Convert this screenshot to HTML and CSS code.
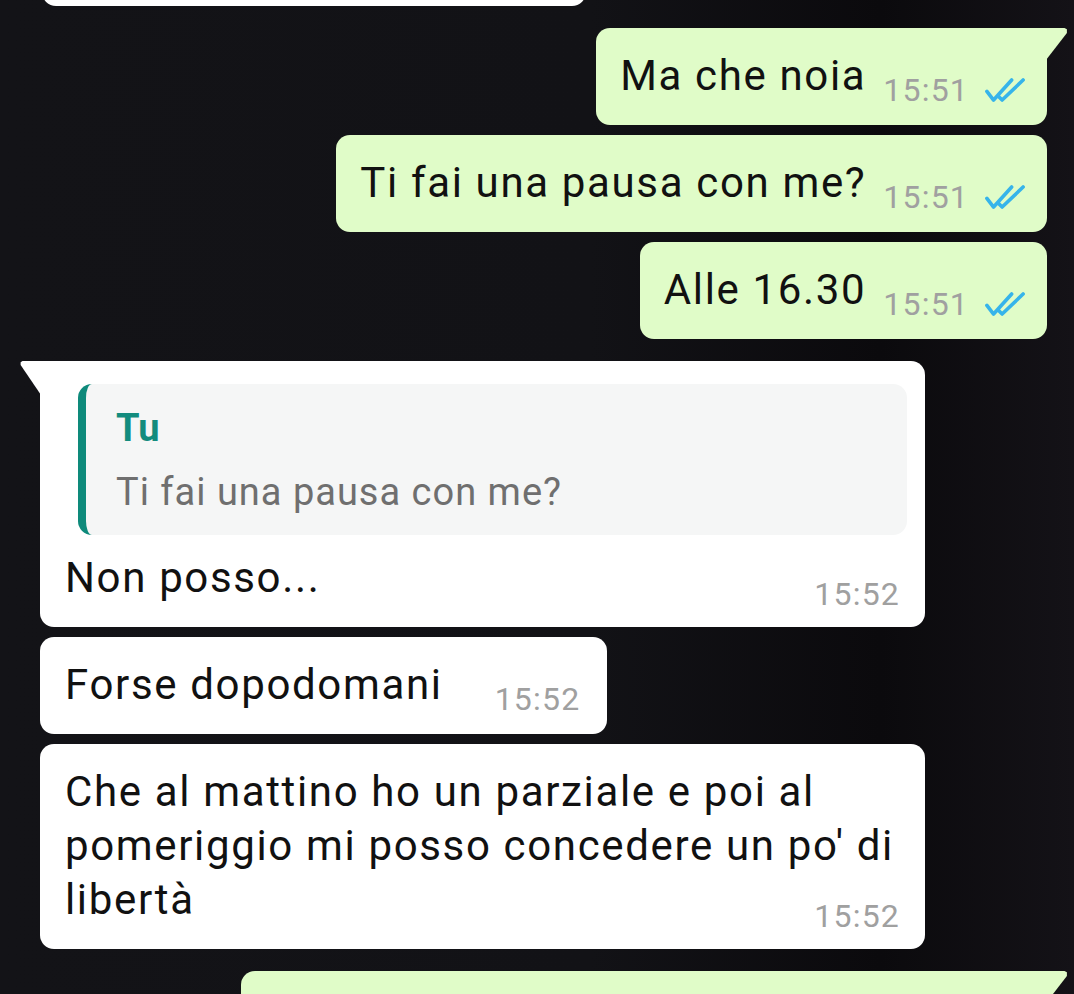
FILE: index.html
```html
<!DOCTYPE html>
<html lang="it">
<head>
  <meta charset="UTF-8" />
  <meta name="viewport" content="width=device-width, initial-scale=1" />
  <title>Chat</title>
  <link rel="stylesheet" href="styles.css">
</head>
<body>

  <div class="chat">
    <div class="bubble in cut"></div>

    <div class="bubble out tail row group">
      <span class="text">Ma che noia</span>
      <span class="meta">15:51
        <svg class="ticks" viewBox="0 0 42 26"><path d="M2 14 L9 23 L28 2 M14 19 L18 23 L40 2"/></svg>
      </span>
    </div>

    <div class="bubble out row">
      <span class="text">Ti fai una pausa con me?</span>
      <span class="meta">15:51
        <svg class="ticks" viewBox="0 0 42 26"><path d="M2 14 L9 23 L28 2 M14 19 L18 23 L40 2"/></svg>
      </span>
    </div>

    <div class="bubble out row">
      <span class="text">Alle 16.30</span>
      <span class="meta">15:51
        <svg class="ticks" viewBox="0 0 42 26"><path d="M2 14 L9 23 L28 2 M14 19 L18 23 L40 2"/></svg>
      </span>
    </div>

    <div class="bubble in tail group wide reply">
      <div class="quote">
        <div class="quote-name">Tu</div>
        <div class="quote-text">Ti fai una pausa con me?</div>
      </div>
      <div class="text">Non posso...</div>
      <div class="meta block">15:52</div>
    </div>

    <div class="bubble in row">
      <span class="text">Forse dopodomani</span>
      <span class="meta">15:52</span>
    </div>

    <div class="bubble in wide">
      <div class="text">Che al mattino ho un parziale e poi al pomeriggio mi posso concedere un po' di libertà</div>
      <div class="meta block">15:52</div>
    </div>

    <div class="bubble out tail group next"></div>
  </div>

</body>
</html>
```

FILE: styles.css
```css
body {
  font-family: Roboto, 'Noto Sans', sans-serif;
  background: linear-gradient(90deg, #131317 0%, #121216 55%, #0b0a0d 82%, #141217 100%);
  color: #111;
  margin: 0;
  height: 994px;
  overflow: hidden;
}

.chat {
  display: flex;
  flex-direction: column;
  gap: 10px;
  padding: 0 27px 0 40px;
}

.bubble {
  position: relative;
  border-radius: 14px;
  padding: 21px 22px 22px 24px;
}

.group {
  margin-top: 12px;
}

.out {
  align-self: flex-end;
  background: #e0fcc8;
}

.in {
  align-self: flex-start;
  background: #fff;
  padding-left: 25px;
  padding-right: 27px;
}

.wide {
  width: 885px;
  box-sizing: border-box;
  padding-right: 25px;
  padding-bottom: 20px;
}

.row {
  display: flex;
  align-items: flex-end;
  gap: 17px;
}

.in.row {
  gap: 52px;
}

.text {
  font-size: 42px;
  line-height: 54px;
  letter-spacing: 1.65px;
}

.meta {
  display: flex;
  align-items: center;
  gap: 16px;
  font-size: 32px;
  line-height: 26px;
  letter-spacing: 1.2px;
  color: #a0a0a0;
  white-space: nowrap;
}

.block {
  justify-content: flex-end;
  margin-top: -24px;
}

.ticks {
  width: 40px;
  height: 25px;
  fill: none;
  stroke: #36b4ea;
  stroke-width: 3.8;
  stroke-linecap: round;
  stroke-linejoin: round;
}

/* tails */
.out.tail {
  border-top-right-radius: 0;
}

.out.tail::after {
  content: "";
  position: absolute;
  top: 0;
  right: -21px;
  width: 22px;
  height: 32px;
  background: #e0fcc8;
  clip-path: polygon(0 0, 84% 0, 95% 4%, 95% 16%, 0 100%);
}

.in.tail {
  border-top-left-radius: 0;
}

.in.tail::before {
  content: "";
  position: absolute;
  top: 0;
  left: -20px;
  width: 21px;
  height: 34px;
  background: #fff;
  clip-path: polygon(12% 0, 100% 0, 100% 100%, 3% 12%, 3% 4%);
}

/* partially visible bubbles */
.cut {
  width: 544px;
  height: 60px;
  margin-top: -54px;
  margin-left: 2px;
  box-sizing: border-box;
}

.next {
  width: 806px;
  height: 100px;
  box-sizing: border-box;
}

/* reply */
.reply {
  padding-top: 23px;
}

.quote {
  background: #f5f6f6;
  border-left: 8px solid #0e8a7b;
  border-radius: 14px;
  margin: 0 -7px 16px 13px;
  padding: 19px 20px 18px 30px;
}

.quote-name {
  font-size: 38px;
  line-height: 50px;
  font-weight: 700;
  color: #128c7e;
}

.quote-text {
  font-size: 38px;
  line-height: 50px;
  letter-spacing: 1px;
  margin-top: 14px;
  color: #6f6f6f;
}
```
